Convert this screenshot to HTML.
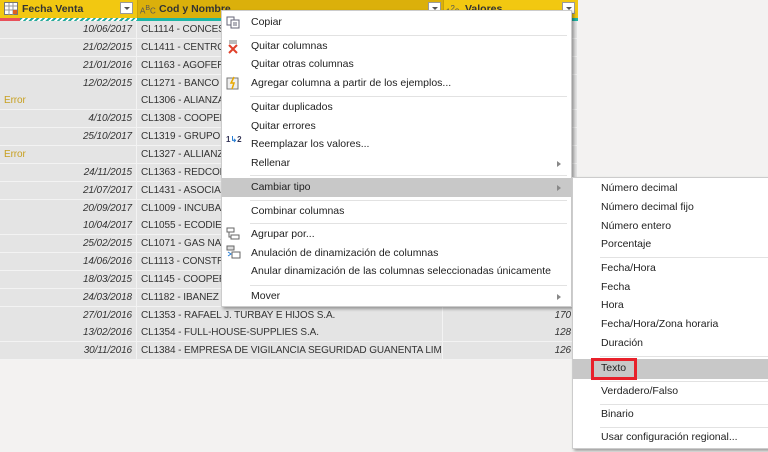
<!DOCTYPE html>
<html><head><meta charset="utf-8"><style>
*{margin:0;padding:0;box-sizing:border-box}
body{width:768px;height:452px;overflow:hidden;background:#f3f2f1;font-family:"Liberation Sans",sans-serif;font-size:10.5px;color:#333;position:relative}
.hdr{position:absolute;top:0;height:19px;background:#f2c811;font-weight:bold;font-size:10.5px;color:#333;line-height:17px}
.dd{position:absolute;top:2px;width:13px;height:12px;background:#fff;border:1px solid #999}
.dd:after{content:"";position:absolute;left:3px;top:4px;border-left:3px solid transparent;border-right:3px solid transparent;border-top:3px solid #555}
.cell{position:absolute;height:18px;background:#e4e4e4;border-right:1px solid #f3f3f3;border-bottom:1px solid #f3f3f3;line-height:17px;white-space:nowrap;overflow:hidden;padding:0 4px;font-size:10px;letter-spacing:-0.1px}
.menu{position:absolute;background:#fff;border:1px solid #ccc;box-shadow:2px 2px 3px rgba(0,0,0,.35)}
.it{position:absolute;left:0;right:0;height:19px;line-height:19px;font-size:10.5px;color:#222;white-space:nowrap}
.sep{position:absolute;height:1px;background:#e2e2e2}
.arr{position:absolute;right:10px;top:7px;border-top:3px solid transparent;border-bottom:3px solid transparent;border-left:4px solid #888}
</style></head><body>

<div class="hdr" style="left:0;width:137px">
 <svg style="position:absolute;left:4px;top:2px" width="14" height="13"><rect x=".5" y=".5" width="13" height="12" fill="#fff" stroke="#777"/><path d="M1 4h12M1 8h12M5 1v12M9 1v12" stroke="#999"/><rect x="9" y="8" width="4" height="4" fill="#e06020"/></svg>
 <span style="position:absolute;left:22px;top:1px">Fecha Venta</span><div class="dd" style="left:120px"></div></div>
<div class="hdr" style="left:137px;width:306px;background:#dbb00b;border-left:1px solid #c9a20a">
 <span style="position:absolute;left:2px;top:0;font-size:8px;font-weight:normal;color:#555">A<sup style="font-size:7px">B</sup>C</span>
 <span style="position:absolute;left:21px;top:1px">Cod y Nombre</span><div class="dd" style="left:290px"></div></div>
<div class="hdr" style="left:443px;width:135px;border-left:1px solid #c9a20a">
 <span style="position:absolute;left:2px;top:0;font-size:8px;font-weight:normal;color:#555">1<sup style="font-size:8px">2</sup>3</span>
 <span style="position:absolute;left:21px;top:1px">Valores</span><div class="dd" style="left:118px"></div></div>
<div style="position:absolute;left:0;top:18px;width:20px;height:3px;background:#e8505a"></div>
<div style="position:absolute;left:20px;top:18px;width:117px;height:3px;background:repeating-linear-gradient(135deg,#28a99a 0 2px,#fff 2px 4px)"></div>
<div style="position:absolute;left:137px;top:18px;width:441px;height:3px;background:#1fb5a5"></div>

<div id="rows"></div>

<div class="menu" style="left:221px;top:10px;width:351px;height:297px">
 <svg style="position:absolute;left:4px;top:5px" width="14" height="13"><rect x="1" y="1" width="7" height="8" fill="#fff" stroke="#667"/><rect x="5" y="4" width="8" height="8" fill="#fff" stroke="#667"/><path d="M7 7h4M7 9h4" stroke="#667"/></svg>
 <div class="it" style="top:2px;padding-left:29px">Copiar</div>
 <div class="sep" style="left:28px;right:4px;top:24px"></div>
 <svg style="position:absolute;left:4px;top:28px" width="14" height="15"><rect x="3" y="1" width="8" height="4" fill="#bbb"/><path d="M3 6l8 8M11 6l-8 8" stroke="#e0402a" stroke-width="2"/></svg>
 <div class="it" style="top:26px;padding-left:29px">Quitar columnas</div>
 <div class="it" style="top:44px;padding-left:29px">Quitar otras columnas</div>
 <svg style="position:absolute;left:4px;top:65px" width="14" height="14"><rect x="1" y="2" width="11" height="11" fill="#eee" stroke="#777"/><path d="M8 1l-3 6h3l-2 6" stroke="#e8a800" stroke-width="1.5" fill="none"/></svg>
 <div class="it" style="top:63px;padding-left:29px">Agregar columna a partir de los ejemplos...</div>
 <div class="sep" style="left:28px;right:4px;top:85px"></div>
 <div class="it" style="top:87px;padding-left:29px">Quitar duplicados</div>
 <div class="it" style="top:106px;padding-left:29px">Quitar errores</div>
 <span style="position:absolute;left:4px;top:124px;font-size:8px;font-weight:bold;color:#335">1<span style="color:#2a7fd4">↳</span>2</span>
 <div class="it" style="top:124px;padding-left:29px">Reemplazar los valores...</div>
 <div class="it" style="top:143px;padding-left:29px">Rellenar<i class="arr"></i></div>
 <div class="sep" style="left:28px;right:4px;top:164px"></div>
 <div class="it" style="top:167px;height:19px;background:#c8c8c8;padding-left:29px">Cambiar tipo<i class="arr"></i></div>
 <div class="sep" style="left:28px;right:4px;top:189px"></div>
 <div class="it" style="top:191px;padding-left:29px">Combinar columnas</div>
 <div class="sep" style="left:28px;right:4px;top:212px"></div>
 <svg style="position:absolute;left:4px;top:216px" width="14" height="13"><rect x="1" y="1" width="7" height="4" fill="#fff" stroke="#666"/><rect x="5" y="8" width="8" height="4" fill="#fff" stroke="#666"/><path d="M3 5v5h2" stroke="#666" fill="none"/></svg>
 <div class="it" style="top:214px;padding-left:29px">Agrupar por...</div>
 <svg style="position:absolute;left:4px;top:234px" width="15" height="14"><rect x="1" y="1" width="7" height="4" fill="#ddd" stroke="#666"/><rect x="6" y="7" width="8" height="6" fill="#fff" stroke="#666"/><path d="M2 7l3 2-3 2" stroke="#2a7fd4" fill="none"/></svg>
 <div class="it" style="top:233px;padding-left:29px">Anulación de dinamización de columnas</div>
 <div class="it" style="top:251px;padding-left:29px">Anular dinamización de las columnas seleccionadas únicamente</div>
 <div class="sep" style="left:28px;right:4px;top:274px"></div>
 <div class="it" style="top:276px;padding-left:29px">Mover<i class="arr"></i></div>
</div>

<div class="menu" style="left:572px;top:177px;width:200px;height:272px">
 <div class="it" style="top:1px;padding-left:28px">Número decimal</div>
 <div class="it" style="top:20px;padding-left:28px">Número decimal fijo</div>
 <div class="it" style="top:39px;padding-left:28px">Número entero</div>
 <div class="it" style="top:57px;padding-left:28px">Porcentaje</div>
 <div class="sep" style="left:27px;right:0;top:79px"></div>
 <div class="it" style="top:81px;padding-left:28px">Fecha/Hora</div>
 <div class="it" style="top:100px;padding-left:28px">Fecha</div>
 <div class="it" style="top:118px;padding-left:28px">Hora</div>
 <div class="it" style="top:137px;padding-left:28px">Fecha/Hora/Zona horaria</div>
 <div class="it" style="top:156px;padding-left:28px">Duración</div>
 <div class="sep" style="left:27px;right:0;top:178px"></div>
 <div class="it" style="top:181px;height:20px;background:#c8c8c8;padding-left:28px">Texto</div>
 <div style="position:absolute;left:18px;top:180px;width:46px;height:22px;border:3px solid #e8202a"></div>
 <div class="sep" style="left:27px;right:0;top:203px"></div>
 <div class="it" style="top:204px;padding-left:28px">Verdadero/Falso</div>
 <div class="sep" style="left:27px;right:0;top:226px"></div>
 <div class="it" style="top:227px;padding-left:28px">Binario</div>
 <div class="sep" style="left:27px;right:0;top:249px"></div>
 <div class="it" style="top:250px;padding-left:28px">Usar configuración regional...</div>
</div>

<script>
var d=["10/06/2017","21/02/2015","21/01/2016","12/02/2015","Error","4/10/2015","25/10/2017","Error","24/11/2015","21/07/2017","20/09/2017","10/04/2017","25/02/2015","14/06/2016","18/03/2015","24/03/2018","27/01/2016","13/02/2016","30/11/2016"];
var c=["CL1114 - CONCESIONARIO","CL1411 - CENTRO MEDICO","CL1163 - AGOFER S.A.S","CL1271 - BANCO DE BOGOTA","CL1306 - ALIANZA FIDUCIARIA","CL1308 - COOPERATIVA","CL1319 - GRUPO AMBIENTAL","CL1327 - ALLIANZ SEGUROS","CL1363 - REDCOL S.A.S","CL1431 - ASOCIACION","CL1009 - INCUBADORA","CL1055 - ECODIESEL","CL1071 - GAS NATURAL","CL1113 - CONSTRUCTORA","CL1145 - COOPERATIVA","CL1182 - IBANEZ CASTRO","CL1353 - RAFAEL J. TURBAY E HIJOS S.A.","CL1354 - FULL-HOUSE-SUPPLIES S.A.","CL1384 - EMPRESA DE VIGILANCIA SEGURIDAD GUANENTA LIMITADA ..."];
var v=["","","9","8","5","5","1","8","","","","","","","","","170","128","126"];
var h="";
for(var i=0;i<19;i++){var t=21+i*17.85;
var e=d[i]=="Error";
h+='<div class="cell" style="left:0;top:'+t+'px;width:137px;'+(e?'color:#c8a020':'text-align:right;font-style:italic')+'">'+d[i]+'</div>';
h+='<div class="cell" style="left:137px;top:'+t+'px;width:306px">'+c[i]+'</div>';
h+='<div class="cell" style="left:443px;top:'+t+'px;width:135px;text-align:right;font-style:italic;padding-right:6px">'+v[i]+'</div>';}
document.getElementById("rows").innerHTML=h;
</script>
</body></html>
